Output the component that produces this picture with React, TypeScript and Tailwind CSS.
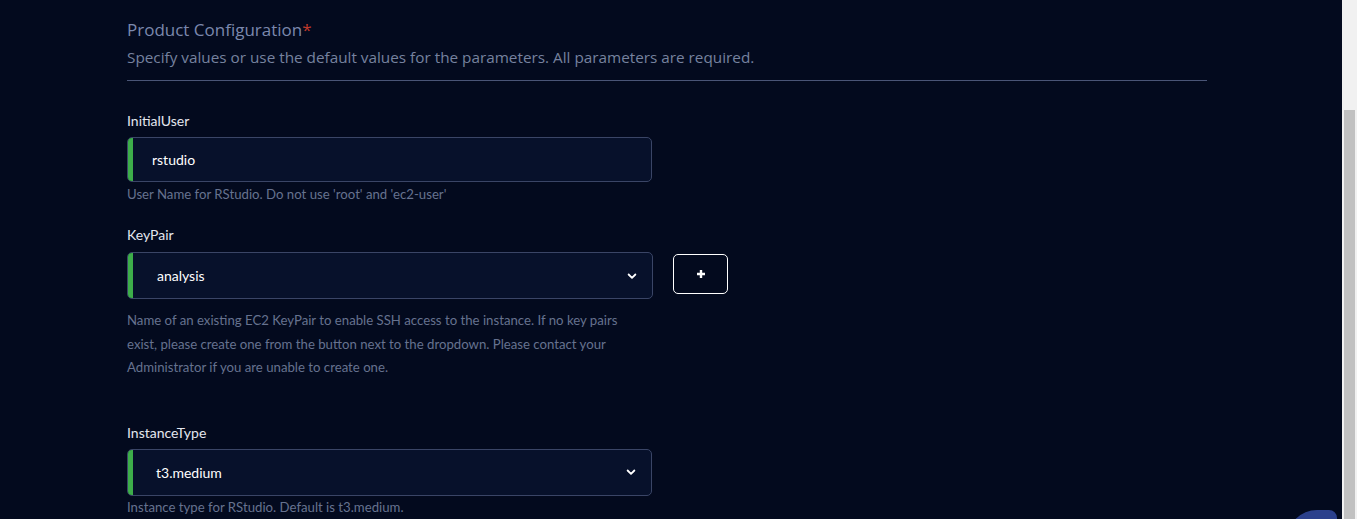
import React from "react";

const Chevron = () => (
  <svg width="12" height="12" viewBox="0 0 16 16" fill="none">
    <path d="M3.5 6l4.5 4.5L12.5 6" stroke="#ffffff" strokeWidth="2.4" strokeLinecap="round" strokeLinejoin="round" />
  </svg>
);

export default function App() {
  return (
    <div className="flex h-[519px] w-[1357px] overflow-hidden bg-[#030a1e] font-['Lato',sans-serif]">
      <div className="relative flex-1 min-w-0">
        <div className="pl-[127px] pr-[135px] pt-[17px]">
          <div className="font-['Open_Sans',sans-serif] text-[17px] leading-[26px] text-[#7b88ad]">
            Product Configuration<span className="text-[#c0392b]">*</span>
          </div>
          <div className="mt-[2px] font-['Open_Sans',sans-serif] text-[15.3px] leading-[24px] text-[#76829f]">
            Specify values or use the default values for the parameters. All parameters are required.
          </div>
          <div className="mt-[11px] h-px bg-[#4a5577]" />

          <div className="mt-[31px] text-[14px] leading-[18px] text-[#e3e7ef]">InitialUser</div>
          <div className="mt-[7px]">
            <div className="relative flex items-center h-[45px] w-[525px] rounded-[5px] border border-[#3a4566] bg-[#07112b] overflow-hidden">
              <div className="w-[5px] self-stretch bg-[#3dae4a]" />
              <span className="ml-[19px] text-[14px] text-white">rstudio</span>
            </div>
          </div>
          <div className="mt-[4px] text-[13.2px] leading-[16px] text-[#66728f]">
            User Name for RStudio. Do not use 'root' and 'ec2-user'
          </div>

          <div className="mt-[24px] text-[14px] leading-[18px] text-[#e3e7ef]">KeyPair</div>
          <div className="mt-[8px] flex items-start gap-[20px]">
            <div className="relative flex items-center h-[47px] w-[526px] rounded-[5px] border border-[#3a4566] bg-[#07112b] overflow-hidden">
              <div className="w-[5px] self-stretch bg-[#3dae4a]" />
              <span className="ml-[24px] text-[14px] text-white">analysis</span>
              <span className="ml-auto mr-[14px] flex"><Chevron /></span>
            </div>
            <button className="mt-[2px] flex h-[40px] w-[55px] items-center justify-center rounded-[5px] border border-white bg-transparent text-white">
              <svg width="10" height="10" viewBox="0 0 10 10">
                <path d="M5 1v8M1 5h8" stroke="#ffffff" strokeWidth="2.4" />
              </svg>
            </button>
          </div>
          <div className="mt-[10px] w-[505px] text-[13.2px] leading-[23.5px] text-[#66728f]">
            Name of an existing EC2 KeyPair to enable SSH access to the instance. If no key pairs exist, please create one from the button next to the dropdown. Please contact your Administrator if you are unable to create one.
          </div>

          <div className="mt-[44px] text-[14px] leading-[18px] text-[#e3e7ef]">InstanceType</div>
          <div className="mt-[7px]">
            <div className="relative flex items-center h-[47px] w-[525px] rounded-[5px] border border-[#3a4566] bg-[#07112b] overflow-hidden">
              <div className="w-[5px] self-stretch bg-[#3dae4a]" />
              <span className="ml-[23px] text-[14px] text-white">t3.medium</span>
              <span className="ml-auto mr-[14px] flex"><Chevron /></span>
            </div>
          </div>
          <div className="mt-[3px] text-[13.2px] leading-[16px] text-[#66728f]">
            Instance type for RStudio. Default is t3.medium.
          </div>
        </div>
        <div className="absolute left-[1287px] top-[510px] h-[40px] w-[50px] rounded-tl-[30px] rounded-tr-[8px] bg-[#2b408c]" />
      </div>
      <div className="w-[15px] h-full bg-[#f1f1f1] flex justify-center">
        <div className="mt-[110px] w-[11px] h-[409px] bg-[#c1c1c1]" />
      </div>
    </div>
  );
}
